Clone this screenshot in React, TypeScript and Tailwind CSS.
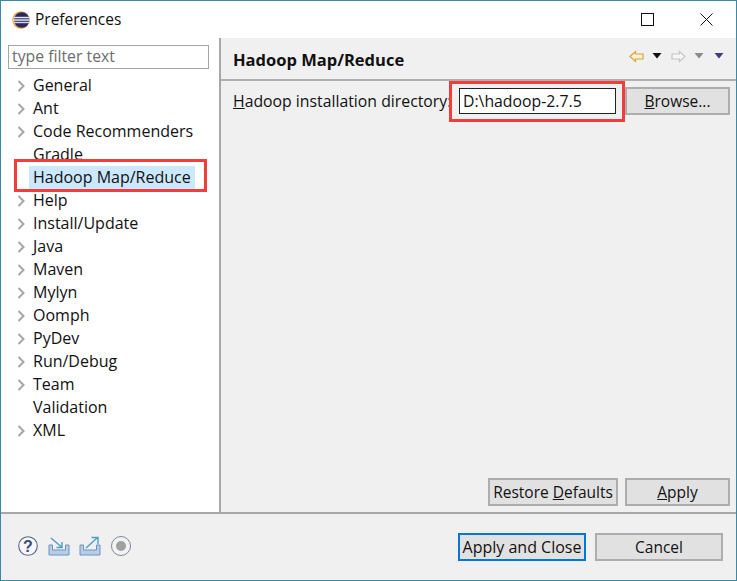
import React from 'react';

const font = "font-['Open_Sans','Noto_Sans',sans-serif]";

const items: { label: string; arrow: boolean; selected?: boolean }[] = [
  { label: 'General', arrow: true },
  { label: 'Ant', arrow: true },
  { label: 'Code Recommenders', arrow: true },
  { label: 'Gradle', arrow: false },
  { label: 'Hadoop Map/Reduce', arrow: false, selected: true },
  { label: 'Help', arrow: true },
  { label: 'Install/Update', arrow: true },
  { label: 'Java', arrow: true },
  { label: 'Maven', arrow: true },
  { label: 'Mylyn', arrow: true },
  { label: 'Oomph', arrow: true },
  { label: 'PyDev', arrow: true },
  { label: 'Run/Debug', arrow: true },
  { label: 'Team', arrow: true },
  { label: 'Validation', arrow: false },
  { label: 'XML', arrow: true },
];

const Chevron = () => (
  <svg width="10" height="12" viewBox="0 0 10 12" fill="none">
    <path d="M1.5 1 L6.5 6 L1.5 11" stroke="#a6a6a6" strokeWidth="2" />
  </svg>
);

const Logo = () => (
  <svg width="18" height="18" viewBox="0 0 18 18">
    <circle cx="9" cy="9" r="8.7" fill="#e9a243" />
    <circle cx="9.8" cy="9" r="7.7" fill="#2b2860" />
    <rect x="1.5" y="5.8" width="16" height="1.5" fill="#e4e4f0" />
    <rect x="1" y="8.3" width="17" height="1.5" fill="#e4e4f0" />
    <rect x="1.5" y="10.8" width="16" height="1.4" fill="#d8d8ea" />
  </svg>
);

const Btn = ({ children, className }: { children: React.ReactNode; className: string }) => (
  <div className={`h-[28px] bg-[#e1e1e1] border-2 border-[#adadad] flex items-center justify-center pt-[1px] text-[15.5px] text-[#111] ${className}`}>
    {children}
  </div>
);

export default function App() {
  return (
    <div className={`${font} w-[737px] h-[581px] relative flex flex-col bg-white border border-[#3b89a6] text-[15.8px] text-[#111] overflow-hidden`}>
      {/* title bar */}
      <div className="h-[37px] shrink-0 flex items-center pl-[11px]">
        <Logo />
        <span className="ml-[5px] text-[15.5px]">Preferences</span>
        <div className="ml-auto flex items-center">
          <svg width="13" height="13" viewBox="0 0 13 13" className="mr-[46px]">
            <rect x="0.5" y="0.5" width="12" height="12" fill="none" stroke="#111" />
          </svg>
          <svg width="13" height="13" viewBox="0 0 13 13" className="mr-[23px]">
            <path d="M0.5 0.5 L12.5 12.5 M12.5 0.5 L0.5 12.5" stroke="#111" />
          </svg>
        </div>
      </div>

      <div className="flex-1 flex min-h-0">
        {/* left tree */}
        <div className="w-[220px] shrink-0 bg-white border-r-2 border-[#a8a8a8] pt-[7px] pl-[7px]">
          <div className="w-[201px] h-[24px] border border-[#a5a5a5] flex items-center pl-[3px] text-[#6d6d6d]">type filter text</div>
          <div className="mt-[5px]">
            {items.map((item) => (
              <div key={item.label} className="h-[23px] flex items-center">
                <div className="w-[21px] pl-[9px] flex items-center">{item.arrow && <Chevron />}</div>
                <span className={`h-[23px] flex items-center pl-[4px] pb-[2px] text-[16px] ${item.selected ? 'bg-[#cce8ff] w-[166px]' : ''}`}>{item.label}</span>
              </div>
            ))}
          </div>
        </div>

        {/* right panel */}
        <div className="flex-1 bg-[#f0f0f0] flex flex-col">
          <div className="h-[43px] shrink-0 border-b-2 border-[#b0b0b0] flex items-center pl-[12px] pr-[11px]">
            <span className="font-bold text-[16.5px] mt-[3px]">Hadoop Map/Reduce</span>
            <div className="ml-auto flex items-center mb-[5px]">
              <svg width="15" height="13" viewBox="0 0 15 13">
                <path d="M1 6.5 L6.5 1.5 V4 H14 V9 H6.5 V11.5 Z" fill="#fdf3d0" stroke="#d9a23f" strokeWidth="1.2" />
              </svg>
              <svg width="11" height="6" viewBox="0 0 11 6" className="ml-[8px]"><path d="M0.5 0 H9.5 L5 5.5 Z" fill="#111" /></svg>
              <svg width="15" height="13" viewBox="0 0 15 13" className="ml-[8px]">
                <path d="M14 6.5 L8.5 1.5 V4 H1 V9 H8.5 V11.5 Z" fill="#f6f6f6" stroke="#c4c4c4" strokeWidth="1.2" />
              </svg>
              <svg width="11" height="6" viewBox="0 0 11 6" className="ml-[8px]"><path d="M0.5 0 H9.5 L5 5.5 Z" fill="#8a8a8a" /></svg>
              <svg width="11" height="6" viewBox="0 0 11 6" className="ml-[9px]"><path d="M0.5 0 H9.5 L5 5.5 Z" fill="#4a3a80" /></svg>
            </div>
          </div>
          <div className="flex items-center h-[28px] mt-[6px] pl-[12px]">
            <span className="w-[226px] whitespace-nowrap pt-[1px]"><span className="underline">H</span>adoop installation directory:</span>
            <div className="w-[157px] h-[26px] bg-white border border-[#222] flex items-center pl-[3px] pt-[1px]">D:\hadoop-2.7.5</div>
            <Btn className="w-[105px] ml-[9px]"><span><span className="underline">B</span>rowse...</span></Btn>
          </div>
          <div className="flex-1" />
          <div className="flex justify-end gap-[7px] pr-[6px] pb-[6px]">
            <Btn className="w-[130px]"><span>Restore <span className="underline">D</span>efaults</span></Btn>
            <Btn className="w-[105px]"><span><span className="underline">A</span>pply</span></Btn>
          </div>
        </div>
      </div>

      {/* bottom bar */}
      <div className="h-[68px] shrink-0 bg-[#f0f0f0] border-t-2 border-[#a8a8a8] flex items-center pl-[17px] pr-[13px]">
        <div className="flex items-center mb-[2px]">
          <svg width="20" height="20" viewBox="0 0 20 20">
            <circle cx="10" cy="10" r="9.3" fill="#f7f7fb" stroke="#54628c" strokeWidth="1.1" />
            <text x="10" y="15.5" textAnchor="middle" fontSize="16" fontWeight="700" fill="#3c4a78" fontFamily="Liberation Sans">?</text>
          </svg>
          <svg width="22" height="20" viewBox="0 0 22 20" className="ml-[10px]">
            <path d="M1 9 H4.5 V14 H17.5 V9 H21 V19 H1 Z" fill="#b8cde6" stroke="#6b92c0" />
            <path d="M3 2 L13 10.5 M14 6 V11.5 H8.5" fill="none" stroke="#4d9ec4" strokeWidth="1.4" />
          </svg>
          <svg width="22" height="20" viewBox="0 0 22 20" className="ml-[9px]">
            <path d="M1 9 H4.5 V14 H17.5 V9 H21 V19 H1 Z" fill="#b8cde6" stroke="#6b92c0" />
            <path d="M7 12 L18 2 M12.5 1.5 H19 V8" fill="none" stroke="#4d9ec4" strokeWidth="1.4" />
          </svg>
          <svg width="20" height="20" viewBox="0 0 20 20" className="ml-[10px]">
            <circle cx="10" cy="10" r="9.5" fill="#f3f3f3" stroke="#7d869f" strokeWidth="1" />
            <circle cx="10" cy="10" r="5" fill="#a0a0a0" />
          </svg>
        </div>
        <div className="ml-auto flex gap-[9px]">
          <div className="w-[128px] h-[28px] bg-[#e1e1e1] border-2 border-[#0078d7] flex items-center justify-center text-[16px]">Apply and Close</div>
          <Btn className="w-[128px]"><span>Cancel</span></Btn>
        </div>
      </div>

      {/* red annotation boxes */}
      <div className="absolute left-[13px] top-[158px] w-[193px] h-[33px] border-[3px] border-[#f33c3c]" />
      <div className="absolute left-[448px] top-[80px] w-[176px] h-[41px] border-[3px] border-[#f33c3c]" />
    </div>
  );
}
